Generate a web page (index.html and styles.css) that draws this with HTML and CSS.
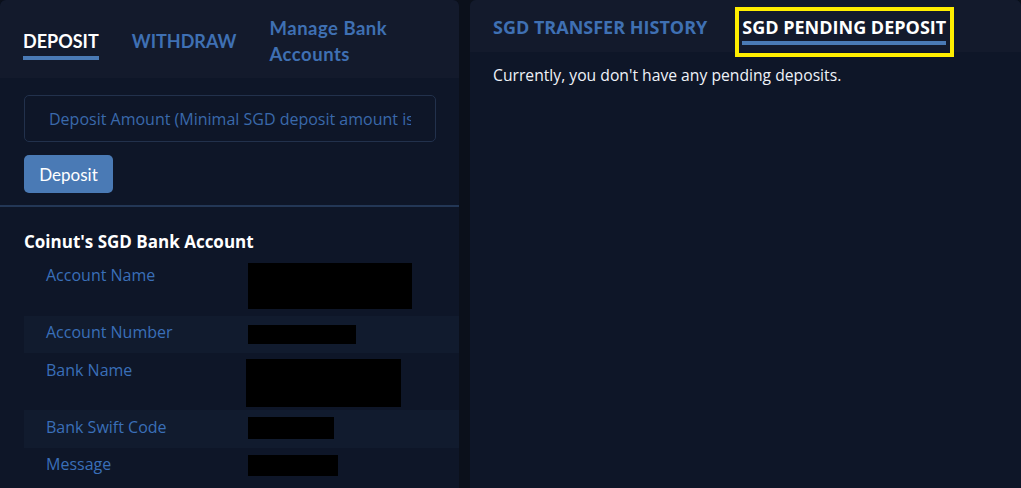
FILE: index.html
```html
<!DOCTYPE html>
<html lang="en">
<head>
    <meta charset="UTF-8">
    <title>SGD Deposit</title>
    <link rel="stylesheet" href="styles.css">
</head>
<body>
    <div class="wrap">
        <div class="panel left">
            <div class="tabs">
                <a class="tab active">DEPOSIT</a>
                <a class="tab">WITHDRAW</a>
                <a class="tab manage">Manage Bank Accounts</a>
            </div>
            <div class="deposit-form">
                <input type="text" class="amount" placeholder="Deposit Amount (Minimal SGD deposit amount is 10 SGD)">
                <button class="btn">Deposit</button>
            </div>
            <div class="bank">
                <h3>Coinut's SGD Bank Account</h3>
                <div class="bank-row r1">
                    <span class="label">Account Name</span>
                    <span class="redact"></span>
                </div>
                <div class="bank-row r2 striped">
                    <span class="label">Account Number</span>
                    <span class="redact"></span>
                </div>
                <div class="bank-row r3">
                    <span class="label">Bank Name</span>
                    <span class="redact"></span>
                </div>
                <div class="bank-row r4 striped">
                    <span class="label">Bank Swift Code</span>
                    <span class="redact"></span>
                </div>
                <div class="bank-row r5">
                    <span class="label">Message</span>
                    <span class="redact"></span>
                </div>
            </div>
        </div>
        <div class="panel right">
            <div class="tabs small">
                <a class="tab2">SGD TRANSFER HISTORY</a>
                <div class="highlight">
                    <a class="tab2 active">SGD PENDING DEPOSIT</a>
                </div>
            </div>
            <p class="empty">Currently, you don't have any pending deposits.</p>
        </div>
    </div>
</body>
</html>
```

FILE: styles.css
```css
* {
    margin: 0;
    padding: 0;
    box-sizing: border-box;
}

body {
    background-color: #0b101b;
    font-family: "Open Sans", sans-serif;
    height: 488px;
    overflow: hidden;
}

.wrap {
    display: flex;
    gap: 11px;
    height: 488px;
}

.panel {
    background-color: #0e1628;
    border-radius: 6px 6px 0 0;
    overflow: hidden;
}

.left {
    width: 459px;
}

.right {
    flex-grow: 1;
    overflow: visible;
}

/* tabs */
.tabs {
    background-color: #131a2c;
    height: 78px;
    display: flex;
    align-items: center;
    padding-left: 23px;
    padding-top: 4px;
    gap: 33px;
    border-radius: 6px 6px 0 0;
}

.tab {
    font-family: Lato, sans-serif;
    font-weight: bold;
    font-size: 18px;
    color: #3f70b3;
    line-height: 26px;
    text-decoration: none;
}

.tab.active {
    color: #ffffff;
    border-bottom: 4px solid #4a7ab5;
    padding-top: 6px;
    padding-bottom: 2px;
}

.tab.manage {
    width: 130px;
    font-size: 18.5px;
    letter-spacing: 0.5px;
}

.tabs.small {
    height: 52px;
    padding-top: 2px;
    gap: 28px;
}

.tab2 {
    font-weight: bold;
    font-size: 18px;
    color: #3f70b3;
    line-height: 24px;
}

.tab2.active {
    display: block;
    color: #ffffff;
    border-bottom: 4px solid #4a7ab5;
    padding-bottom: 2px;
}

/* yellow annotation box round the active tab */
.highlight {
    align-self: flex-start;
    margin-top: 5px;
    border: 4px solid #ffee00;
    padding: 4px 4px 8px 3px;
}

/* deposit form */
.deposit-form {
    padding: 17px 23px 12px 24px;
    border-bottom: 2px solid #233756;
}

.amount {
    display: block;
    width: 412px;
    height: 47px;
    background: transparent;
    border: 1px solid #22314c;
    border-radius: 5px;
    padding: 0 24px;
    font-family: "Open Sans", sans-serif;
    font-size: 16px;
    outline: none;
}

.amount::placeholder {
    color: #3a69ab;
}

.btn {
    margin-top: 13px;
    width: 89px;
    height: 38px;
    background-color: #4a7ab5;
    color: #ffffff;
    border: none;
    border-radius: 5px;
    font-family: Lato, sans-serif;
    font-size: 17px;
}

/* bank details */
.bank {
    padding: 24px 0 0 24px;
}

.bank h3 {
    color: #ffffff;
    font-size: 17px;
    font-weight: bold;
    line-height: 22px;
    margin-bottom: 9px;
}

.bank-row {
    display: flex;
    align-items: flex-start;
    padding: 5px 0 0 22px;
}

.bank-row.striped {
    background-color: #111b2e;
}

.label {
    width: 202px;
    color: #3a6fb8;
    font-size: 16px;
    line-height: 22px;
}

.redact {
    display: block;
    background-color: #000000;
}

.r1 { height: 54px; padding-top: 2px; }
.r1 .redact { width: 164px; height: 46px; margin-top: -1px; }

.r2 { height: 37px; }
.r2 .redact { width: 108px; height: 19px; margin-top: 4px; }

.r3 { height: 57px; padding-top: 6px; }
.r3 .redact { width: 155px; height: 48px; margin-left: -2px; }

.r4 { height: 38px; padding-top: 6px; }
.r4 .redact { width: 86px; height: 22px; margin-top: 1px; }

.r5 { height: 40px; }
.r5 .redact { width: 90px; height: 21px; margin-top: 2px; }

.empty {
    color: #eef2f8;
    font-size: 15.7px;
    padding: 12px 0 0 23px;
    line-height: 22px;
}
```
